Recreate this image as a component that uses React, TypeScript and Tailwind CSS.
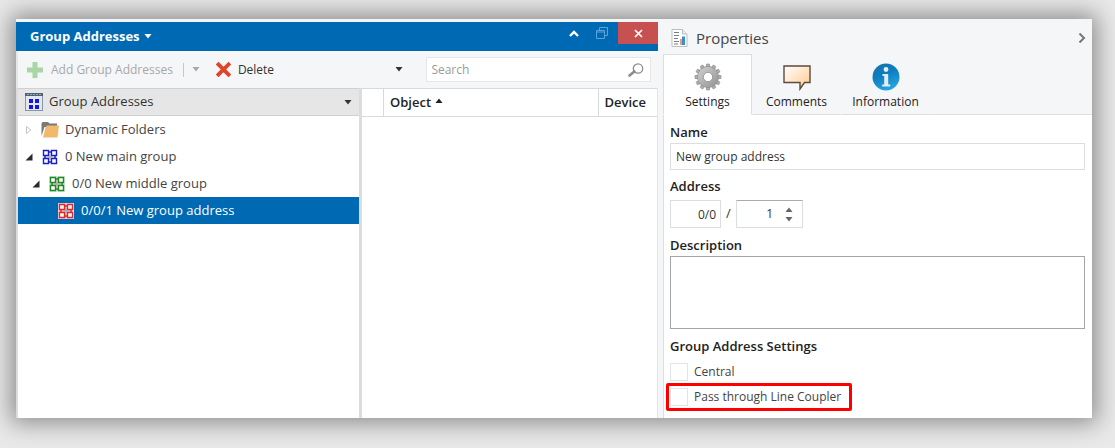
import { useState } from "react";
import type { ReactNode } from "react";

function Caret({ className = "" }: { className?: string }) {
    return (
        <svg viewBox="0 0 8 5" className={`h-[5px] w-2 shrink-0 ${className}`} aria-hidden="true">
            <path d="M0.500 0h7L4 4.500z" fill="currentColor" />
        </svg>
    );
}

function PlusIcon() {
    return (
        <svg viewBox="0 0 16 16" className="size-4 shrink-0" aria-hidden="true">
            <path d="M5.500 0h5v5.500H16v5h-5.500V16h-5v-5.500H0v-5h5.500z" fill="#a9d6a3" />
        </svg>
    );
}

function CrossIcon() {
    return (
        <svg viewBox="0 0 14 14" className="size-[15px] shrink-0" aria-hidden="true">
            <path d="M2.300 2.300l9.400 9.400M11.700 2.300l-9.400 9.400" stroke="#e0452b" strokeWidth="3.600" strokeLinecap="square" />
        </svg>
    );
}

function WindowIcon() {
    return (
        <svg viewBox="0 0 18 18" className="size-[18px] shrink-0" aria-hidden="true">
            <rect x="0.5" y="0.5" width="17" height="17" fill="#e3e8ee" stroke="#8797a8" />
            <path d="M0 1.5h18" stroke="#4f6373" strokeWidth="3" />
            <path d="M2 1.5h14" stroke="#93a7b5" strokeDasharray="2 1" />
            <path d="M4 6h4v4H4zM10 6h4v4h-4zM4 12h4v4H4zM10 12h4v4h-4z" fill="#1414e6" />
        </svg>
    );
}

function FolderIcon() {
    return (
        <svg viewBox="0 0 18 16" className="h-4 w-[18px] shrink-0" aria-hidden="true">
            <path d="M0.500 14V1.500L1.500 0H7l1.500 1.500H16V5H3.500z" fill="#77797c" />
            <path d="M4.500 5.500L6 3.500h12L16.500 15.500H2z" fill="#f0b96b" />
        </svg>
    );
}

function GroupIcon({ color, back = "#ffffff" }: { color: string; back?: string }) {
    return (
        <svg viewBox="0 0 16 16" className="size-4 shrink-0" aria-hidden="true">
            <path d="M0 0h16v16H0z" fill={back} />
            <path d="M3 6.500v3M13 6.500v3M6.500 3h3M6.500 13h3" stroke={color} strokeWidth="1.500" />
            <g fill="#fff" stroke={color} strokeWidth="1.400">
                <path d="M1.500 1.500h5v5h-5z" />
                <path d="M9.500 1.500h5v5h-5z" />
                <path d="M1.500 9.500h5v5h-5z" />
                <path d="M9.500 9.500h5v5h-5z" />
            </g>
            <path d="M8 4.500v7M4.500 8h7" stroke="#a9a9a9" strokeWidth="1.400" />
        </svg>
    );
}

function ReportIcon() {
    return (
        <svg viewBox="0 0 17 18" className="h-[18px] w-[17px] shrink-0" aria-hidden="true">
            <path d="M1 0.500h10.500L16 5v12.500H1z" fill="#fff" stroke="#b9bec3" />
            <path d="M11.500 0.500V5H16" fill="#e8eaec" stroke="#b9bec3" />
            <path d="M3 3.500h5M3 6.500h5M3 9.500h4M3 12.500h5M3 15h4" stroke="#777e84" />
            <path d="M9 10h2v6H9z" fill="#ef9a78" />
            <path d="M11 7.500h3V16h-3z" fill="#3b8fc6" />
        </svg>
    );
}

function GearIcon() {
    const teeth = [0, 30, 60, 90, 120, 150, 180, 210, 240, 270, 300, 330];

    return (
        <svg viewBox="0 0 28 28" className="size-7" aria-hidden="true">
            <defs>
                <linearGradient id="gear" x1="0" y1="0" x2="1" y2="1">
                    <stop offset="0" stopColor="#c9c9c9" />
                    <stop offset="1" stopColor="#9a9a9a" />
                </linearGradient>
            </defs>
            <g fill="#b0b0b0" stroke="#858585" strokeWidth="0.600">
                {teeth.map((angle) => (
                    <path key={angle} d="M12 5L12.600 1h2.800l.6 4z" transform={`rotate(${angle} 14 14)`} />
                ))}
            </g>
            <circle cx="14" cy="14" r="7.500" fill="none" stroke="#858585" strokeWidth="6.400" />
            <circle cx="14" cy="14" r="7.500" fill="none" stroke="url(#gear)" strokeWidth="5.600" />
        </svg>
    );
}

function CommentIcon() {
    return (
        <svg viewBox="0 0 28 28" className="size-7" aria-hidden="true">
            <defs>
                <linearGradient id="comment" x1="0" y1="0" x2="1" y2="1">
                    <stop offset="0" stopColor="#ffffff" />
                    <stop offset="1" stopColor="#ffc98a" />
                </linearGradient>
            </defs>
            <path d="M1 3h26v16.500h-5.500L17 26v-6.500H1z" fill="url(#comment)" stroke="#5c4a3e" strokeWidth="1.400" />
        </svg>
    );
}

function InfoIcon() {
    return (
        <svg viewBox="0 0 28 28" className="size-7" aria-hidden="true">
            <defs>
                <linearGradient id="info" x1="0" y1="0" x2="0.400" y2="1">
                    <stop offset="0" stopColor="#1670ac" />
                    <stop offset="0.500" stopColor="#0d7fc0" />
                    <stop offset="1" stopColor="#25a2dc" />
                </linearGradient>
            </defs>
            <circle cx="14" cy="14" r="13.500" fill="url(#info)" />
            <circle cx="14" cy="6.500" r="2.400" fill="#e3edf5" />
            <path d="M10.500 11h5.700v10.500h2v2h-8v-2h2v-8.500h-1.700z" fill="#e3edf5" />
        </svg>
    );
}

function SearchIcon() {
    return (
        <svg viewBox="0 0 16 14" className="h-3.5 w-4 shrink-0" aria-hidden="true">
            <circle cx="10" cy="5.500" r="4.700" fill="none" stroke="#8c8c8c" strokeWidth="1.300" />
            <path d="M6.300 8.500L1.500 12.500" stroke="#8c8c8c" strokeWidth="2.600" strokeLinecap="round" />
        </svg>
    );
}

type Row = { label: string; indent: string; icon: ReactNode; state: "open" | "closed" | "leaf" };

const rows: Row[] = [
    { label: "Dynamic Folders", indent: "pl-[7px]", icon: <FolderIcon />, state: "closed" },
    { label: "0 New main group", indent: "pl-[7px]", icon: <GroupIcon color="#1a1ad0" />, state: "open" },
    { label: "0/0 New middle group", indent: "pl-3.5", icon: <GroupIcon color="#1f8a24" back="#d9ead9" />, state: "open" },
    { label: "0/0/1 New group address", indent: "pl-[23px]", icon: <GroupIcon color="#e0262b" back="#f6d5d5" />, state: "leaf" },
];

function Expander({ state }: { state: Row["state"] }) {
    return (
        <svg viewBox="0 0 8 8" className="size-2 shrink-0" aria-hidden="true">
            {state === "open" && <path d="M7.500 0.500v7h-7z" fill="#2b2b2b" />}
            {state === "closed" && <path d="M1.500 0.500v7L6 4z" fill="#fff" stroke="#c4c4c4" />}
        </svg>
    );
}

function GroupAddresses() {
    const [selected, setSelected] = useState(3);

    return (
        <section className="flex min-w-0 flex-col">
            <header className="flex h-[29px] bg-[#0069b4] text-white">
                <button className="flex items-center gap-1 pl-3.5 text-[13px] font-bold">
                    Group Addresses <Caret />
                </button>
                <div className="ml-auto flex h-[22px] items-center">
                    <button aria-label="Collapse" className="flex w-6 justify-center">
                        <svg viewBox="0 0 10 7" className="h-[7px] w-2.5">
                            <path d="M1 6l4-4 4 4" fill="none" stroke="#fff" strokeWidth="2.400" />
                        </svg>
                    </button>
                    <button aria-label="Restore" className="flex w-8 justify-center">
                        <svg viewBox="0 0 12 12" className="size-3" fill="none" stroke="#5ba3d8">
                            <path d="M3.500 3V0.500h8v8H9" />
                            <path d="M0.500 3.500h8v8h-8zM0.500 5h8" />
                        </svg>
                    </button>
                    <button aria-label="Close" className="flex h-full w-10 items-center justify-center bg-[#c75050]">
                        <svg viewBox="0 0 9 9" className="size-[9px]">
                            <path d="M1 1l7 7M8 1L1 8" stroke="#fff" strokeWidth="1.700" />
                        </svg>
                    </button>
                </div>
            </header>

            <div className="flex h-[37px] items-center border-l-2 border-[#e4e6e8] bg-[#f5f6f8] pr-[7px] pl-[9px] text-xs">
                <button className="flex items-center gap-2 text-[#a8a8a8]">
                    <PlusIcon /> Add Group Addresses
                </button>
                <button aria-label="More add options" className="ml-2.5 flex h-3.5 items-center border-l border-[#c8c8c8] pl-2 text-[#a8a8a8]">
                    <Caret />
                </button>
                <button className="ml-4 flex items-center gap-[7px] text-[#333]">
                    <CrossIcon /> Delete
                </button>
                <button aria-label="More" className="mr-[23px] ml-auto flex text-[#333]">
                    <Caret />
                </button>
                <label className="flex h-[25px] w-[36%] items-center border border-[#e4e6e8] bg-white pr-1.5 pl-1">
                    <input aria-label="Search" placeholder="Search" className="w-0 grow outline-none placeholder:text-[#9b9b9b]" />
                    <SearchIcon />
                </label>
            </div>

            <div className="grid grow grid-cols-[343fr_296fr] border-l-2 border-[#dcdcdc]">
                <div className="border-r-3 border-[#dcdcdc]">
                    <button className="flex h-7 w-full items-center gap-1.5 border-y border-[#d0d0d0] bg-[#e6e6e6] pr-[7px] pl-[7px] text-[13px] text-[#333]">
                        <WindowIcon /> Group Addresses <Caret className="ml-auto" />
                    </button>
                    <ul role="tree" className="text-[13px] text-[#444]">
                        {rows.map((row, i) => (
                            <li key={row.label} role="treeitem" aria-selected={i === selected}>
                                <button
                                    onClick={() => setSelected(i)}
                                    className={`flex h-[27px] w-full items-center ${row.indent} ${i === selected ? "bg-[#0069b4] text-white" : ""}`}
                                >
                                    <Expander state={row.state} />
                                    <span className="mr-1.5 ml-2 flex w-[18px] justify-center">{row.icon}</span>
                                    {row.label}
                                </button>
                            </li>
                        ))}
                    </ul>
                </div>
                <div className="border-r border-[#e4e6e8]">
                    <table className="w-full table-fixed text-left text-[13px] text-[#222]">
                        <thead>
                            <tr className="h-7 border-y border-[#d9d9d9]">
                                <th className="w-[22px]" aria-label="State" />
                                <th className="border-x border-[#d9d9d9] pl-1.5 font-semibold">
                                    <span className="flex items-center gap-1">
                                        Object
                                        <Caret className="mb-1 rotate-180" />
                                    </span>
                                </th>
                                <th className="w-[59px] pl-1.5 font-semibold">Device</th>
                            </tr>
                        </thead>
                    </table>
                </div>
            </div>
        </section>
    );
}

const tabs = [
    { label: "Settings", icon: <GearIcon />, width: "w-[89px]" },
    { label: "Comments", icon: <CommentIcon />, width: "w-[89px]" },
    { label: "Information", icon: <InfoIcon />, width: "w-[89px]" },
];

function Properties() {
    const [tab, setTab] = useState("Settings");

    return (
        <section className="flex min-w-0 flex-col">
            <header className="flex h-8 items-center bg-[#f5f6f8] pr-1.5 pl-2">
                <ReportIcon />
                <h2 className="ml-2 text-[15px] text-[#444]">Properties</h2>
                <button aria-label="Hide panel" className="ml-auto">
                    <svg viewBox="0 0 8 10" className="h-2.5 w-2">
                        <path d="M1.500 0.500L6 5 1.500 9.500" fill="none" stroke="#777" strokeWidth="2" />
                    </svg>
                </button>
            </header>

            <div role="tablist" className="flex h-[61px] bg-[#f5f6f8] text-xs text-[#222]">
                {tabs.map((t) => (
                    <button
                        key={t.label}
                        role="tab"
                        aria-selected={t.label === tab}
                        onClick={() => setTab(t.label)}
                        className={`flex flex-col items-center gap-[3px] border pt-2 ${t.width} ${
                            t.label === tab
                                ? "border-[#dcdfe2] border-b-white bg-white"
                                : "border-transparent border-b-[#dcdfe2]"
                        }`}
                    >
                        {t.icon}
                        {t.label}
                    </button>
                ))}
                <div className="grow border-b border-[#dcdfe2]" />
            </div>

            <form className="flex grow flex-col border-l border-[#dcdfe2] bg-white pt-[7px] pr-[7px] pb-[7px] pl-1.5 text-xs text-[#333]">
                <label htmlFor="name" className="text-[13px] leading-5 font-semibold text-[#222]">Name</label>
                <input id="name" defaultValue="New group address" className="mt-px h-[27px] border border-[#dcdfe2] px-[5px] outline-none" />

                <label htmlFor="address" className="mt-1.5 text-[13px] leading-5 font-semibold text-[#222]">Address</label>
                <div className="mt-1 flex items-center">
                    <input aria-label="Parent group" defaultValue="0/0" className="h-7 w-[51px] border border-[#dcdfe2] pr-1 text-right outline-none" />
                    <span className="w-[15px] text-center text-[13px]">/</span>
                    <div className="flex h-7 w-[67px] items-center border border-[#dcdfe2] border-t-[#a9abad] pr-[9px]">
                        <input id="address" defaultValue="1" className="w-0 grow pr-3 text-right outline-none" />
                        <div className="flex flex-col gap-[5px] text-[#666]">
                            <button type="button" aria-label="Increase"><Caret className="block rotate-180" /></button>
                            <button type="button" aria-label="Decrease"><Caret className="block" /></button>
                        </div>
                    </div>
                </div>

                <label htmlFor="description" className="mt-[7px] text-[13px] leading-5 font-semibold text-[#222]">Description</label>
                <textarea id="description" className="mt-px h-[73px] resize-none border border-[#a3a5a7] outline-none" />

                <fieldset className="flex flex-col items-start">
                    <legend className="pt-[7px] text-[13px] leading-5 font-semibold text-[#222]">Group Address Settings</legend>
                    <label className="mt-[7px] flex items-center gap-1.5 text-[#444]">
                        <input type="checkbox" className="size-[18px] appearance-none border border-[#e2e4e6] checked:bg-[#0069b4]" />
                        Central
                    </label>
                    <label className="-ml-1 mt-0.5 flex h-7 items-center gap-1.5 rounded-xs border-3 border-[#ff0000] pr-2 pl-px text-[#444]">
                        <input type="checkbox" className="size-[18px] appearance-none border border-[#e2e4e6] checked:bg-[#0069b4]" />
                        Pass through Line Coupler
                    </label>
                </fieldset>
            </form>
        </section>
    );
}

export default function App() {
    return (
        <main className="min-h-screen overflow-hidden bg-[#e9e9e9] pt-[19px] pr-[23px] pb-[30px] pl-4 font-['Open_Sans','Noto_Sans',sans-serif]">
            <div className="grid grid-cols-[642fr_429fr] gap-x-[5px] border-t-3 border-[#f3f5f6] bg-[#f5f6f8] shadow-[0_0_22px_5px_rgba(0,0,0,0.4)]">
                <div className="grid bg-white">
                    <GroupAddresses />
                </div>
                <Properties />
            </div>
        </main>
    );
}
